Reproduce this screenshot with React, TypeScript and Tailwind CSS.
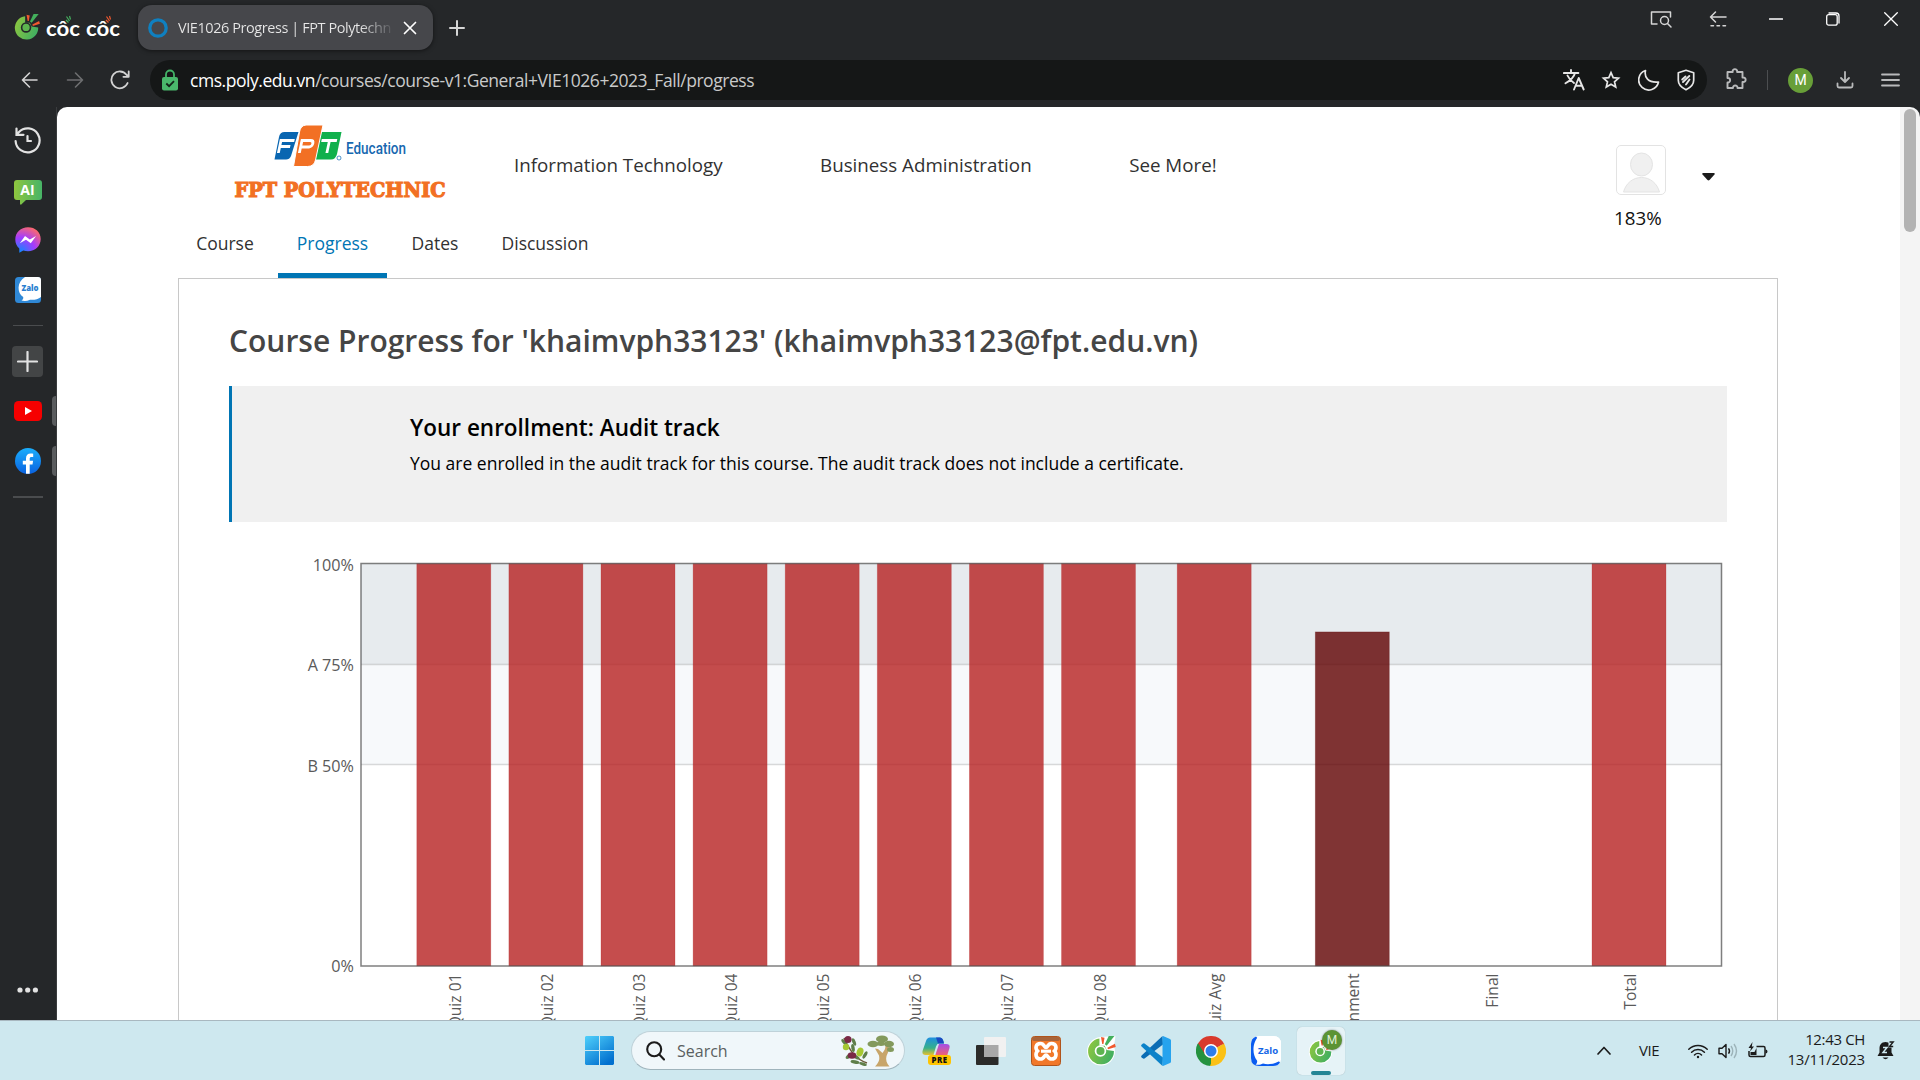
import type { ReactNode } from 'react';

const sans = 'Open Sans, Noto Sans, sans-serif';

function CocCocMark({ className, outline = false }: { className?: string; outline?: boolean }) {
  return (
    <svg viewBox="0 0 30 30" className={className}>
      <defs>
        <linearGradient id="ccg" x1="0" y1="0" x2="1" y2="0.4">
          <stop offset="0" stopColor="#93c83d" />
          <stop offset="1" stopColor="#45b05f" />
        </linearGradient>
      </defs>
      {outline && <path d="M14 2C6 3 1 9 1 16a13.500 13.500 0 0 0 27 0c0-2 0-3-1-4L28.500 1Z" fill="#fff" />}
      <path d="M13 3.500A12.500 12.500 0 1 0 27 15.500l-7-1-2-4-5 0Z" fill="url(#ccg)" />
      <circle cx="14" cy="15.500" r="5.600" fill={outline ? '#fff' : '#252729'} />
      <circle cx="14" cy="15.500" r="3.900" fill="#5db44f" />
      <path d="M14.500 2l3.400.6-1 6-1.200 0Z" fill="#f1592f" />
      <path d="M22 1l5.500 0-7.500 9.500-1.800-1.500Z" fill="#43b05c" />
      <path d="M28 8.500l.8 3-7.500 2.300-.6-1.500Z" fill="#f1592f" />
    </svg>
  );
}

function CocCocWord() {
  return (
    <svg viewBox="0 0 76 28" className="ml-[5px] h-[28px] w-[76px]">
      <g fill="#fff" fontFamily="Lato, sans-serif" fontWeight="700" fontSize="20.500">
        <text x="0" y="23" textLength="34" lengthAdjust="spacingAndGlyphs">côc</text>
        <text x="40" y="23" textLength="34" lengthAdjust="spacingAndGlyphs">côc</text>
      </g>
      <path d="M20.500 3.500l3 4.500M20 7l2.500 2.500M23.500 3l1 3.500" stroke="#45b05f" strokeWidth="1.200" />
      <path d="M60.500 3.500l3 4.500M60 7l2.500 2.500M63.500 3l1 3.500" stroke="#f1592f" strokeWidth="1.200" />
    </svg>
  );
}

function Line({ className, children, w = 1.6, vb = '0 0 24 24' }: { className: string; children: ReactNode; w?: number; vb?: string }) {
  return (
    <svg viewBox={vb} className={className} fill="none" stroke="currentColor" strokeWidth={w} strokeLinecap="round" strokeLinejoin="round">
      {children}
    </svg>
  );
}

function TitleBar() {
  return (
    <div className="flex h-[55px] items-start pl-[13px] text-[#d6d6d6]">
      <CocCocMark className="mt-[13px] h-[28px] w-[28px]" />
      <div className="mt-[13px]"><CocCocWord /></div>
      <div className="ml-[16px] mt-[5px] flex h-[45px] w-[295px] items-center rounded-[14px] bg-[#46474b] pl-[10px] shadow-[0_1px_4px_rgba(0,0,0,0.5)]">
        <svg viewBox="0 0 20 20" className="h-[20px] w-[20px]">
          <circle cx="10" cy="10" r="8.200" fill="none" stroke="#0f80c0" strokeWidth="3.300" />
        </svg>
        <span className="ml-[10px] w-[214px] overflow-hidden whitespace-nowrap bg-linear-to-r from-[#e8e8e8] from-85% to-[#55565a] bg-clip-text font-['Open_Sans'] text-[14.5px] tracking-[-0.43px] text-transparent">
          VIE1026 Progress | FPT Polytechn
        </span>
        <Line className="ml-[11px] h-[14px] w-[14px] text-white" vb="0 0 14 14" w={1.7}><path d="M1.500 1.500l11 11M12.500 1.500l-11 11" /></Line>
      </div>
      <Line className="ml-[16px] mt-[20px] h-[16px] w-[16px]" vb="0 0 16 16" w={2}><path d="M8 1v14M1 8h14" /></Line>
      <div className="ml-auto flex items-center pr-[22px] pt-[9px]">
        <Line className="h-[20px] w-[24px]" vb="0 0 24 20" w={1.5}>
          <path d="M8 15H2.500V3h19v5" /><circle cx="15.500" cy="11.500" r="4" /><path d="M18.500 14.500l3.500 3.500" />
        </Line>
        <Line className="ml-[35px] h-[20px] w-[20px]" vb="0 0 20 20" w={1.5}>
          <path d="M18 8H2.500M7.500 3L2.500 8l5 5" /><path d="M3 16.800h15.500" strokeDasharray="2.500 3.500" />
        </Line>
        <Line className="ml-[41px] h-[14px] w-[14px] text-white" vb="0 0 14 14" w={1.3}><path d="M.5 7h13" /></Line>
        <Line className="ml-[43px] h-[14px] w-[14px] text-white" vb="0 0 14 14" w={1.3}>
          <rect x="0.700" y="2.700" width="10.500" height="10.500" rx="2" /><path d="M3 1h7a3 3 0 0 1 3 3v7" />
        </Line>
        <Line className="ml-[44px] h-[14px] w-[14px] text-white" vb="0 0 14 14" w={1.3}><path d="M.7.7l12.600 12.600M13.300.7L.7 13.300" /></Line>
      </div>
    </div>
  );
}

function AddressBar() {
  return (
    <div className="flex h-[52px] items-start pl-[20px] pt-[5px] text-[#b9babb]">
      <div className="flex h-[40px] items-center">
        <Line className="h-[20px] w-[20px] text-[#d3d3d3]" vb="0 0 20 20"><path d="M17 10H2.500M9.500 3l-7 7 7 7" /></Line>
        <Line className="ml-[25px] h-[20px] w-[20px] text-[#6d6e70]" vb="0 0 20 20"><path d="M2.500 10h15M10.500 3l7 7-7 7" /></Line>
        <Line className="ml-[25px] h-[20px] w-[20px] text-[#d3d3d3]" vb="0 0 20 20" w={1.8}>
          <path d="M17.600 13A8.400 8.400 0 1 1 16.500 4.800L18.500 6.500M18.700 1.500v5.300h-5.300" />
        </Line>
      </div>
      <div className="ml-[20px] flex h-[40px] w-[1557px] items-center rounded-full bg-[#151717] pl-[12px] text-white">
        <svg viewBox="0 0 16 22" className="h-[22px] w-[16px]">
          <path d="M4 9V5.500a4 4 0 0 1 8 0V9" fill="none" stroke="#43b467" strokeWidth="1.800" />
          <rect y="8" width="16" height="13.500" rx="2" fill="#4ab86c" />
          <path d="M4.300 14.500l2.800 2.700 4.900-5" fill="none" stroke="#14241a" strokeWidth="1.800" />
        </svg>
        <span className="ml-[12px] whitespace-nowrap font-['Open_Sans'] text-[17.5px] tracking-[-0.45px] text-[#c9caca]">
          <span className="text-white">cms.poly.edu.vn</span>/courses/course-v1:General+VIE1026+2023_Fall/progress
        </span>
        <div className="ml-auto flex items-center pr-[11px] text-[#e6e6e6]">
          <Line className="h-[22px] w-[22px]" vb="0 0 22 22" w={1.9}>
            <path d="M.9 4h14.500M8 1v3M12 4c-1 4-5.500 8-9.500 10.300M4.500 6.500c1.500 3.500 3.500 5.500 6.500 7.500" />
            <path d="M11 20.500L15.700 9l5 11.500M12.600 16.800h6.300" />
          </Line>
          <Line className="ml-[16px] h-[20px] w-[20px]" vb="0 0 20 20" w={1.7}>
            <path d="M10 2.700l2.200 5 5.300.5-4 3.600 1.200 5.200-4.700-2.800L5.300 17l1.200-5.200-4-3.600 5.300-.5Z" strokeLinejoin="miter" />
          </Line>
          <Line className="ml-[17px] h-[22px] w-[22px]" vb="0 0 22 22" w={1.7}>
            <path d="M7.500 1.500C6 8 10 14 20.500 13A10 10 0 1 1 7.500 1.500Z" />
          </Line>
          <Line className="ml-[16px] h-[22px] w-[20px]" vb="0 0 20 22" w={1.7}>
            <path d="M10 1.300l7.700 2.500v7.500c0 4.500-3.500 7.500-7.700 9.500-4.200-2-7.700-5-7.700-9.500V3.800Z" />
            <path d="M6.200 10.500L9.500 7.500M7 13L13.300 7M10 15.500L13.500 10.500" strokeWidth="1.900" />
          </Line>
        </div>
      </div>
      <div className="flex h-[40px] items-center">
        <Line className="ml-[17px] h-[24px] w-[24px]" vb="0 0 24 24" w={1.9}>
          <path d="M3.500 4h5.200c-.8-3.800 5.200-3.800 4.400 0h5.400v5.500c4.200-.8 4.200 5.300 0 4.500V20h-5c.5-3.300-5-3.300-4.500 0H3.500v-5.500c3.500.6 3.500-5.200 0-4.500Z" />
        </Line>
        <div className="ml-[19px] h-[20px] w-px bg-[#4c4e50]" />
        <div className="ml-[20px] flex h-[25px] w-[25px] items-center justify-center rounded-full bg-[#689f38] font-['Roboto'] text-[14px] text-white">M</div>
        <Line className="ml-[23px] h-[18px] w-[18px]" vb="0 0 18 18" w={1.8}><path d="M9 1v9.500M5 7l4 4 4-4M1.500 12.500V15a1.500 1.500 0 0 0 1.500 1.500h12a1.500 1.500 0 0 0 1.500-1.500v-2.500" /></Line>
        <Line className="ml-[27px] h-[14px] w-[19px]" vb="0 0 19 14" w={1.8}><path d="M1 1.500h17M1 7h17M1 12.500h17" /></Line>
      </div>
    </div>
  );
}

function SideBar() {
  return (
    <div className="relative flex w-[57px] shrink-0 flex-col items-center border-r border-[#3a3c3e] pr-[1px]">
      <Line className="mt-[20px] h-[27px] w-[27px] text-[#e2e2e2]" vb="0 0 27 27" w={2.2}>
        <path d="M1.600 14A12 12 0 1 0 5 5L2.500 7.500M2.500 1.500v6.300h7M13.500 9v5h3.500" strokeLinejoin="miter" />
      </Line>
      <svg viewBox="0 0 28 25" className="mt-[26px] h-[25px] w-[28px]">
        <defs><linearGradient id="ai"><stop stopColor="#8fc63e" /><stop offset="1" stopColor="#47b467" /></linearGradient></defs>
        <path d="M3 0h22a3 3 0 0 1 3 3v14a3 3 0 0 1-3 3H12l-5 4.700-1-.5V20H3a3 3 0 0 1-3-3V3a3 3 0 0 1 3-3Z" fill="url(#ai)" />
        <text x="13.500" y="14.500" textAnchor="middle" fontFamily="Open Sans, sans-serif" fontWeight="700" fontSize="14" fill="#fff">AI</text>
      </svg>
      <svg viewBox="0 0 26 26" className="mt-[22px] h-[26px] w-[26px]">
        <defs><radialGradient id="ms" cx="0.200" cy="1" r="1.100"><stop stopColor="#0a8bff" /><stop offset="0.550" stopColor="#a43bff" /><stop offset="1" stopColor="#ff6a68" /></radialGradient></defs>
        <path d="M13 .3C5.800.3.300 5.500.300 12.500c0 3.700 1.500 6.800 4 9v4.200l4-2.100c1.500.5 3 .7 4.700.7 7.200 0 12.700-5.200 12.700-12.200S20.200.3 13 .3Z" fill="url(#ms)" />
        <path d="M4.800 16.300L10 9l4.800 3.500L21 9l-5.200 7.300-4.800-3.600Z" fill="#fff" />
      </svg>
      <svg viewBox="0 0 26 26" className="mt-[24px] h-[26px] w-[26px]">
        <rect width="26" height="26" rx="3.500" fill="#2f88d6" />
        <path d="M10 0h13a3 3 0 0 1 3 3v17c-3 2.500-7 3-11 2.700-3 1.500-6 1.500-8.500.8 1.500-1 2-2 1.700-3.500C2 16 1.500 5 10 0Z" fill="#fff" />
        <text x="15" y="14" textAnchor="middle" fontFamily="Open Sans, sans-serif" fontWeight="800" fontSize="7.800" fill="#2a7fd0">Zalo</text>
      </svg>
      <div className="mt-[22px] h-px w-[30px] bg-[#4a4c4e]" />
      <div className="mt-[20px] flex h-[31px] w-[31px] items-center justify-center rounded-[4px] bg-[#434546]">
        <Line className="h-[21px] w-[21px] text-[#e2e2e2]" vb="0 0 21 21" w={2.2}><path d="M10.500 1v19M1 10.500h19" /></Line>
      </div>
      <svg viewBox="0 0 28 20" className="mt-[24px] h-[20px] w-[28px]"><rect width="28" height="20" rx="4.500" fill="#f60000" /><path d="M11 6l7 4-7 4Z" fill="#fff" /></svg>
      <svg viewBox="0 0 26 26" className="mt-[27px] h-[26px] w-[26px]">
        <defs><linearGradient id="fb" x2="0" y2="1"><stop stopColor="#1aaefc" /><stop offset="1" stopColor="#0a62e0" /></linearGradient></defs>
        <circle cx="13" cy="13" r="13" fill="url(#fb)" />
        <path d="M11 25.800v-9.300H7.800v-3.800H11v-2.200c0-3.500 1.700-5 4.700-5 1 0 1.800.1 2.500.3v3.100h-1.700c-1.300 0-1.800.6-1.800 1.900v1.900h3.400l-.6 3.800h-2.800v9.300Z" fill="#fff" />
      </svg>
      <div className="mt-[22px] h-[2px] w-[30px] bg-[#4a4c4e]" />
      <svg viewBox="0 0 22 6" className="mb-[27px] mt-auto h-[6px] w-[22px]" fill="#e2e2e2"><circle cx="3" cy="3" r="2.600" /><circle cx="10.700" cy="3" r="2.600" /><circle cx="18.400" cy="3" r="2.600" /></svg>
      <div className="absolute right-0 top-[289px] h-[30px] w-[4px] rounded-l-[4px] bg-[#5a5c5e]" />
      <div className="absolute right-0 top-[339px] h-[30px] w-[4px] rounded-l-[4px] bg-[#5a5c5e]" />
    </div>
  );
}

function FptLogo() {
  return (
    <svg viewBox="0 0 214 78" className="h-[78px] w-[214px]">
      <path d="M50.500 8H64.500L57 32q-1.500 3.500-5 3.500H40.500L45 13q1-5 5.500-5Z" fill="#0966b1" />
      <path d="M84 8h23.500L103 30q-1.500 5.500-6 5.500H78.500Z" fill="#10b04c" />
      <path d="M72 1h17L81.500 36q-1.500 6.500-8 6.500H59.500L65.500 8q1-6.500 6.500-7Z" fill="#f27024" stroke="#fff" strokeWidth="1" />
      <g fill="none" stroke="#fff" strokeWidth="2.800" transform="skewX(-12)">
        <path d="M50.500 29V16.500H64M50.500 22.500H61" />
        <path d="M71.500 29V16.500H80q3 0 3 3t-3 3.500H71.500" />
        <path d="M91 16.500H106.500M99 16.500V29" />
      </g>
      <circle cx="105" cy="34" r="2" fill="none" stroke="#0966b1" strokeWidth="0.700" />
      <text x="112" y="29.500" fontFamily="Roboto, sans-serif" fontSize="16" fontWeight="500" fill="#1768b0" textLength="60" lengthAdjust="spacingAndGlyphs">Education</text>
      <text x="0.500" y="73" fontFamily="DejaVu Serif, serif" fontSize="20.500" fontWeight="700" fill="#f27024" stroke="#f27024" strokeWidth="1.200" textLength="211" lengthAdjust="spacingAndGlyphs">FPT POLYTECHNIC</text>
    </svg>
  );
}

function SiteHeader() {
  return (
    <div className="flex h-[124px] shrink-0 items-start pl-[177px] text-[18.75px] text-[#313131]">
      <div className="mt-[17px]"><FptLogo /></div>
      <nav className="mt-[45px] flex gap-[97.5px] pl-[66px] leading-[26px]">
        <span>Information Technology</span>
        <span>Business Administration</span>
        <span>See More!</span>
      </nav>
      <div className="ml-auto mr-[185px] mt-[38px] flex">
        <div className="flex w-[51px] flex-col text-[#111]">
          <svg viewBox="0 0 50 50" className="ml-[1px] h-[50px] w-[50px]">
            <rect x="0.500" y="0.500" width="49" height="49" rx="4.500" fill="#fff" stroke="#e3e3e3" />
            <g fill="#f0f0f0" stroke="#e4e4e4"><path d="M7.500 47C10 38 17 32.500 25.500 32.500S41 38 43.500 47Z" /><ellipse cx="25.500" cy="19.500" rx="11" ry="11.500" /></g>
          </svg>
          <span className="-ml-px mt-[10px] leading-[26px]">183%</span>
        </div>
        <svg viewBox="0 0 13 8" className="ml-[36px] mt-[28px] h-[8px] w-[13px]"><path d="M1.200 0h10.600q1.500.3.700 1.500L7.500 7q-1 .9-2 0L.5 1.500Q-.3.3 1.200 0Z" fill="#1c1c1c" /></svg>
      </div>
    </div>
  );
}

const tabs = [
  { label: 'Course', box: 'w-[94px] mr-[6px]' },
  { label: 'Progress', box: 'w-[109px] border-b-[5px] border-[#0075b4] text-[#0075b4]' },
  { label: 'Dates', box: 'w-[96px]' },
  { label: 'Discussion', box: 'w-[124px]' },
];

function CourseTabs() {
  return (
    <div className="flex h-[47px] shrink-0 pl-[121px] text-[17.5px] leading-[24px] text-[#313131]">
      {tabs.map((t) => (
        <div key={t.label} className={`flex justify-center ${t.box}`}>{t.label}</div>
      ))}
    </div>
  );
}

const bars = [
  ...[1, 2, 3, 4, 5, 6, 7, 8].map((n, i) => ({ label: `Quiz 0${n}`, x: 416.8 + i * 92.1, value: 100, color: '#b72121' })),
  { label: 'Quiz Avg', x: 1177.2, value: 100, color: '#b72121' },
  { label: 'Assignment', x: 1315.3, value: 83, color: '#600101' },
  { label: 'Final', x: 1453.5, value: 0, color: '#b72121' },
  { label: 'Total', x: 1592, value: 100, color: '#b72121' },
];

function GradeChart() {
  const top = 563.5, bottom = 966, left = 361, right = 1721.5, h = bottom - top;
  const ticks = [
    { t: '100%', y: top + 1.5 }, { t: 'A 75%', y: 664.7 }, { t: 'B 50%', y: 765.5 }, { t: '0%', y: bottom },
  ];
  return (
    <svg viewBox="229 552 1500 530" className="mt-[30px] h-[530px] w-[1500px] shrink-0" fontFamily={sans} fontSize="15.600" fill="#5a5a5a">
      <rect x={left} y={top} width={right - left} height={101} fill="#e7ebee" />
      <rect x={left} y={664.5} width={right - left} height={100} fill="#f7f9fb" />
      <path d={`M${left} 664.500H${right}M${left} 764.500H${right}`} stroke="#000" strokeOpacity="0.140" strokeWidth="1.500" />
      {bars.map((b) => (
        <g key={b.label}>
          {b.value > 0 && (
            <rect x={b.x} y={bottom - (h * b.value) / 100} width="74" height={(h * b.value) / 100} fill={b.color} fillOpacity="0.800" stroke={b.color} strokeOpacity="0.300" strokeWidth="0.800" />
          )}
          <text transform={`translate(${b.x + 44} 973.5) rotate(-90)`} textAnchor="end">{b.label}</text>
        </g>
      ))}
      <path d={`M${left} ${top}H${right}V${bottom}H${left}Z`} fill="none" stroke="#545454" strokeOpacity="0.750" strokeWidth="1.500" />
      {ticks.map((k) => (
        <text key={k.t} x="354" y={k.y + 6.2} textAnchor="end" fontSize="16.200">{k.t}</text>
      ))}
    </svg>
  );
}

function CoursePage() {
  return (
    <div className="flex min-w-0 flex-1 flex-col overflow-hidden rounded-tl-[10px] bg-white font-['Open_Sans']">
      <SiteHeader />
      <CourseTabs />
      <div className="ml-[121px] flex h-[820px] w-[1600px] shrink-0 flex-col border border-[#c8c8c8] pl-[50px]">
        <h1 className="mt-[41px] text-[30px] font-semibold leading-[42px] text-[#454545]">
          Course Progress for 'khaimvph33123' (khaimvph33123@fpt.edu.vn)
        </h1>
        <div className="mt-[24px] h-[136px] w-[1498px] shrink-0 border-l-[3px] border-[#0075b4] bg-[#f0f0f0] pl-[178px] pt-[26px] text-black">
          <h2 className="text-[22.5px] font-semibold leading-[32px]">Your enrollment: Audit track</h2>
          <p className="mt-[7px] text-[17.5px] leading-[24px]">You are enrolled in the audit track for this course. The audit track does not include a certificate.</p>
        </div>
        <GradeChart />
      </div>
    </div>
  );
}

function TaskBar() {
  return (
    <div className="flex h-[60px] items-center border-t border-[#a9b8c0] bg-[#cee8ef] pl-[585px] font-['Open_Sans'] text-[#1b1b1b]">
      <svg viewBox="0 0 29 29" className="h-[29px] w-[29px]">
        <defs><linearGradient id="win" x2="0.700" y2="1"><stop stopColor="#4fd0fb" /><stop offset="1" stopColor="#0270cf" /></linearGradient></defs>
        <path d="M1 0h13v14H0V1Zm14 0h13l1 1v13H15ZM0 15h14v14H1l-1-1Zm15 0h14v13l-1 1H15Z" fill="url(#win)" />
      </svg>
      <div className="ml-[17px] flex h-[39px] w-[274px] items-center rounded-full border border-[#bfd2d9] border-b-[#9fb4bc] bg-[#f0f7fa] pl-[14px]">
        <Line className="h-[20px] w-[19px]" vb="0 0 19 20" w={2.1}><circle cx="8.200" cy="8.200" r="7" /><path d="M13.300 13.500l4.700 5" /></Line>
        <span className="ml-[12px] text-[16px] text-[#5a5f61]">Search</span>
        <svg viewBox="0 0 54 32" className="ml-auto mr-[9px] h-[32px] w-[54px]">
          <path d="M3 3C8 14 14 24 26 28" stroke="#6b5a3a" strokeWidth="1.500" fill="none" />
          <g fill="#5f7f4a"><ellipse cx="3" cy="7" rx="3.500" ry="1.700" transform="rotate(50 3 7)" /><ellipse cx="13" cy="7" rx="4" ry="1.700" transform="rotate(70 13 7)" /><ellipse cx="8" cy="21" rx="4" ry="1.800" transform="rotate(-40 8 21)" /><ellipse cx="14" cy="27" rx="4.500" ry="1.800" transform="rotate(10 14 27)" /><ellipse cx="24" cy="20" rx="4" ry="1.700" transform="rotate(-60 24 20)" /><ellipse cx="22" cy="29" rx="4" ry="1.500" transform="rotate(20 22 29)" /><ellipse cx="12" cy="13" rx="4" ry="1.700" transform="rotate(80 12 13)" /><ellipse cx="15" cy="22" rx="4" ry="1.600" transform="rotate(30 15 22)" /></g>
          <circle cx="7" cy="4.500" r="3.600" fill="#7a2946" /><circle cx="5" cy="12" r="3.200" fill="#a6c832" /><ellipse cx="19" cy="17" rx="3.300" ry="4.600" fill="#a6c832" transform="rotate(20 19 17)" /><ellipse cx="11" cy="20.500" rx="4.300" ry="3.300" fill="#7a2946" />
          <path d="M34 31.500c5-5 4.500-8 4-11l-4-7 3 .5 4.500 4c2-3 3-4 3-8h3c.5 5 0 7-2 11-1 4 0 7 3 10.500Z" fill="#c8a56a" />
          <g fill="#83995c"><ellipse cx="41" cy="4" rx="6" ry="3.600" /><ellipse cx="32" cy="9" rx="5.500" ry="3.300" /><ellipse cx="40" cy="8.500" rx="4" ry="2.500" /><ellipse cx="48" cy="9" rx="5" ry="3.200" /><ellipse cx="49.500" cy="14.500" rx="3.500" ry="2.500" /></g>
        </svg>
      </div>
      <svg viewBox="0 0 30 30" className="ml-[17px] h-[30px] w-[30px]">
        <defs>
          <linearGradient id="cp1" x2="0" y2="1"><stop stopColor="#1e8fe0" /><stop offset="0.600" stopColor="#36b08a" /><stop offset="1" stopColor="#e9c12e" /></linearGradient>
          <linearGradient id="cp2" x2="0" y2="1"><stop stopColor="#a44de8" /><stop offset="1" stopColor="#f3646c" /></linearGradient>
        </defs>
        <path d="M8 1.500h10q3 0 4 6h-5q-2 0-3 3l-2.500 8.500H3.500Q-.5 19 .7 14.500L4 5q1-3.500 4-3.500Z" fill="url(#cp1)" />
        <path d="M14 1.500h4q3 0 4 6h-6Z" fill="#1b49c0" />
        <path d="M17 8h7q4.500 0 3.500 4l-2.500 8H13Z" fill="url(#cp2)" />
        <rect x="6" y="19" width="23" height="10" rx="3" fill="#ffc400" />
        <text x="17.500" y="27" textAnchor="middle" fontFamily="Open Sans, sans-serif" fontWeight="800" fontSize="7.800" letterSpacing="0.500" fill="#111">PRE</text>
      </svg>
      <svg viewBox="0 0 30 30" className="ml-[24px] h-[30px] w-[30px]">
        <rect y="9" width="22.500" height="20" rx="1" fill="#2b2b2a" /><rect x="8" y="1" width="22" height="20" rx="1" fill="#f1f1f1" /><path d="M8 9h14.500v12H8Z" fill="#a8a8a8" />
      </svg>
      <svg viewBox="0 0 30 30" className="ml-[25px] h-[30px] w-[30px]">
        <rect x="0.500" y="0.500" width="29" height="29" rx="3" fill="#f1782a" stroke="#b0541c" /><rect x="1" y="1" width="28" height="4" rx="2" fill="#a8643a" />
        <path d="M9.500 7.500c4 0 3.500 4 5.500 4s1.500-4 5.500-4c5 0 5.500 5 3 7.500 2.500 2.500 2 8-3 8-4 0-3.500-4-5.500-4s-1.500 4-5.500 4c-5 0-5.500-5.500-3-8-2.500-2.500-2-7.500 3-7.500Z" fill="none" stroke="#fff" strokeWidth="3.600" />
        <path d="M10 15.200h10" stroke="#fff" strokeWidth="3.200" />
      </svg>
      <CocCocMark outline className="ml-[25px] h-[31px] w-[31px]" />
      <svg viewBox="0 0 30 30" className="ml-[24px] h-[30px] w-[30px]">
        <path d="M22 8.500L3.500 22.500Q2.500 23 1.700 22.300L.5 21.200Q-.3 20.300.6 19.400L21.500 0Z" fill="#0a6cb4" />
        <path d="M22 21.500L3.500 7.500Q2.500 7 1.700 7.700L.5 8.800Q-.3 9.700.6 10.600L21.500 30Z" fill="#0b82c9" />
        <path d="M22 0l7 3q1 .5 1 1.500v21q0 1-1 1.500l-7 3q-.8-.5-.5-1.500v-27Q21.200.5 22 0Z" fill="#26a3ee" />
      </svg>
      <svg viewBox="0 0 30 30" className="ml-[25px] h-[30px] w-[30px]">
        <path d="M15 15L2 7.500A15 15 0 0 1 28 7.500Z" fill="#d93a2d" /><path d="M15 15L28 7.500A15 15 0 0 1 15 30Z" fill="#fbc116" /><path d="M15 15L15 30A15 15 0 0 1 2 7.500Z" fill="#25923f" />
        <path d="M15 8h13.300a15 15 0 0 0-.4-.8L15 7.500ZM21.200 18.500L15 30h-1l4-10ZM8.800 18.500L2 7.500Z" fill="#fbc116" /><path d="M15 8.200H28L26 5 15 4.500ZM9 18.600L2 7.500 6 4 12 9Z" fill="#d93a2d" />
        <path d="M9 18.500L2 7.500q-1 1.500-1.500 4Z" fill="#25923f" />
        <circle cx="15" cy="15" r="7" fill="#fff" /><circle cx="15" cy="15" r="5.500" fill="#2f7de9" />
      </svg>
      <svg viewBox="0 0 30 30" className="ml-[25px] h-[30px] w-[30px]">
        <path d="M8 0h14q8 0 8 8v14q0 8-8 8H8q-8 0-8-8V8q0-8 8-8Z" fill="#fff" />
        <path d="M5 .6Q0 2.500 0 8v14q0 8 8 8h14q5 0 7-3.500Z" fill="#0b5cf0" />
        <path d="M8 0h14q8 0 8 8v16c-5 4-13 5-18 3.500-2.500 1.500-5 1.500-7.500 1 1.500-1 2-3 1.500-4C1 19 1 6 8 0Z" fill="#fff" />
        <text x="17" y="17.500" textAnchor="middle" fontFamily="Open Sans, sans-serif" fontWeight="700" fontSize="9.600" fill="#1566e6">Zalo</text>
      </svg>
      <div className="relative ml-[16px] flex h-[48px] w-[48px] items-center justify-center rounded-[5px] bg-[#e6f3f7] shadow-[0_0_1px_rgba(0,0,0,0.25)]">
        <CocCocMark outline className="h-[26px] w-[26px]" />
        <div className="absolute right-[3px] top-[3px] flex h-[20px] w-[20px] items-center justify-center rounded-full bg-[#5b9334] font-['Roboto'] text-[12px] text-[#dfeed6] shadow-[0_0_2px_rgba(0,0,0,0.5)]">M</div>
        <div className="absolute bottom-0 left-[14px] h-[4px] w-[20px] rounded-full bg-[#248595]" />
      </div>
      <div className="ml-auto flex items-center pr-[25px]">
        <Line className="h-[10px] w-[14px]" vb="0 0 14 10" w={1.7}><path d="M1 8l6-6.500 6 6.500" /></Line>
        <span className="ml-[28px] w-[23px] text-[15px] tracking-[-0.4px]">VIE</span>
        <Line className="ml-[26px] h-[16px] w-[20px]" vb="0 0 20 16" w={1.5}>
          <path d="M.8 6.200a13 13 0 0 1 18.400 0M3.600 9.200a9 9 0 0 1 12.800 0M6.500 12a5 5 0 0 1 7 0" /><circle cx="10" cy="14" r="1.200" fill="currentColor" stroke="none" />
        </Line>
        <svg viewBox="0 0 20 16" className="ml-[10px] h-[16px] w-[20px]" fill="none" stroke="#1b1b1b" strokeWidth="1.400" strokeLinejoin="round">
          <path d="M1 5.300h3L8 1.500v13l-4-3.800H1Z" /><path d="M10.500 5.300q2 2.700 0 5.400" /><path d="M13 3q3.500 5 0 10M16 1q5 7 0 14" stroke="#9db3b9" />
        </svg>
        <svg viewBox="0 0 20 18" className="ml-[9px] h-[18px] w-[21px]">
          <path d="M9 4.500h7q1.500 0 1.500 1.500v7q0 1.500-1.500 1.500H3q-1.500 0-1.500-1.500V9" fill="none" stroke="#1b1b1b" strokeWidth="1.500" />
          <path d="M18 7.500q2 0 2 2t-2 2ZM3 10h4l2-4v7H3ZM5 0L1 6h2.500L2.500 9.500 6.500 4.500H4.300Z" fill="#1b1b1b" />
        </svg>
        <div className="mb-[3px] ml-[13px] flex w-[84px] flex-col items-end text-[15px] leading-[20px]">
          <span className="tracking-[-0.35px]">12:43 CH</span>
          <span className="tracking-[-0.2px]">13/11/2023</span>
        </div>
        <svg viewBox="0 0 18 21" className="ml-[12px] h-[21px] w-[18px]">
          <path d="M8.500 2C4.500 2 2.500 5 2.500 8v4.500L.5 16h16l-2-3.500V8C14.500 5 12.500 2 8.500 2Z" fill="#1b1b1b" /><path d="M5.500 17.500h6q-3 3.500-6 0Z" fill="#1b1b1b" />
          <path d="M11.500.5h5.500v7h-5.500Z" fill="#cee8ef" /><path d="M12.500 2h3.700l-3.700 4.500h3.700" fill="none" stroke="#1b1b1b" strokeWidth="1.400" />
          <path d="M6 7.500h4L6 12.500h4" fill="none" stroke="#cee8ef" strokeWidth="1.500" />
        </svg>
      </div>
    </div>
  );
}

export default function App() {
  return (
    <div className="flex h-[1080px] w-[1920px] flex-col overflow-hidden bg-[#252729]">
      <TitleBar />
      <AddressBar />
      <div className="flex h-[913px]">
        <SideBar />
        <CoursePage />
        <div className="w-[20px] rounded-tr-[10px] bg-[#f4f4f4] pl-[4px] pt-[2px]">
          <div className="h-[123px] w-[12px] rounded-full bg-[#b3b3b3]" />
        </div>
      </div>
      <TaskBar />
    </div>
  );
}
